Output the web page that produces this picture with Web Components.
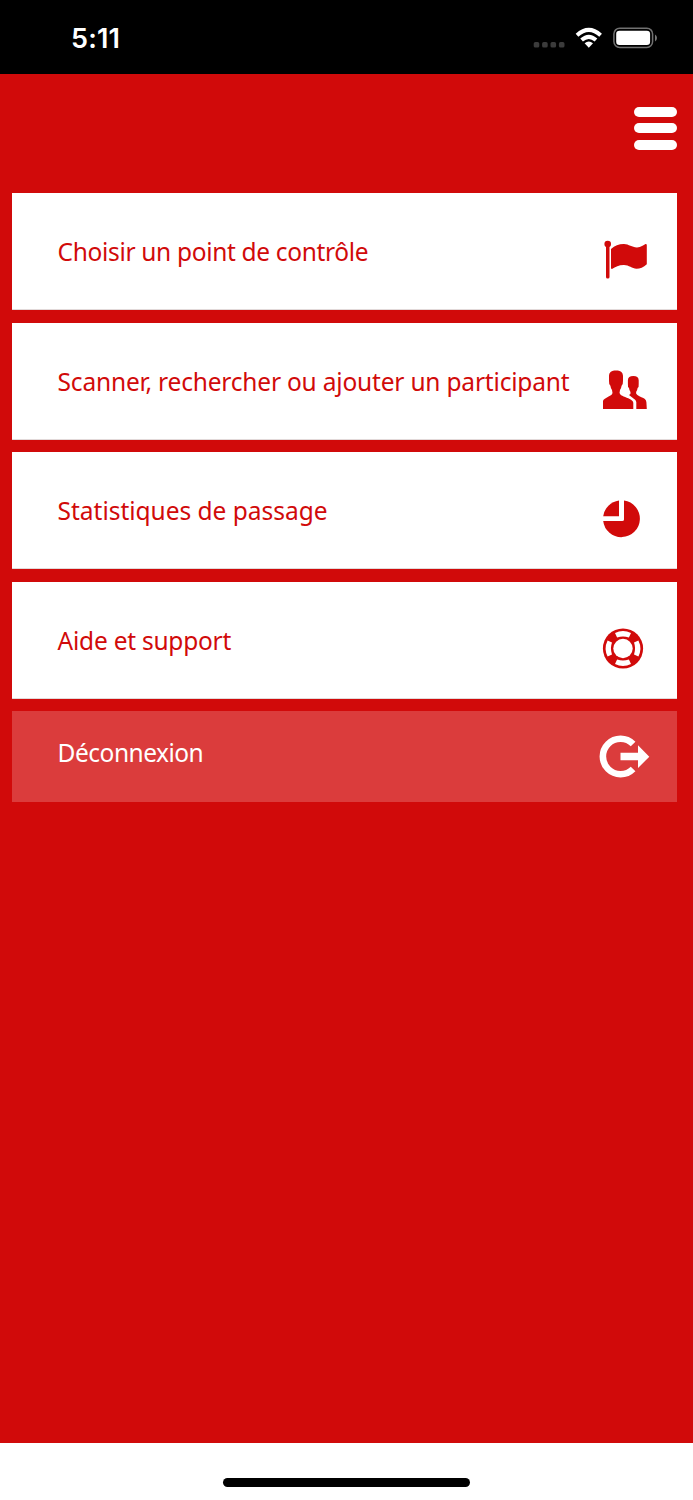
<!DOCTYPE html>
<html lang="fr">
<head>
<meta charset="utf-8">
<title>Menu</title>
<style>
html,body{margin:0;padding:0;background:#d10a0a}
</style>
</head>
<body>
<app-screen>
  <status-bar slot="status">5:11</status-bar>
  <menu-toggle slot="header"></menu-toggle>
  <menu-item icon="flag" style="--track:-.33px">Choisir un point de contrôle</menu-item>
  <menu-item icon="people" style="--track:-.19px">Scanner, rechercher ou ajouter un participant</menu-item>
  <menu-item icon="pie" style="--track:-.02px">Statistiques de passage</menu-item>
  <menu-item icon="ring" style="--track:-.24px">Aide et support</menu-item>
  <menu-item icon="logout" variant="logout" style="--track:-.5px">Déconnexion</menu-item>
</app-screen>
<script>
const define = (name, html, setup) => customElements.define(name, class extends HTMLElement {
  connectedCallback() {
    if (this.shadowRoot) return;
    const t = document.createElement('template');
    t.innerHTML = html;
    this.attachShadow({mode: 'open'}).append(t.content.cloneNode(true));
    if (setup) setup(this);
  }
});

define('app-screen', `<style>
:host{display:flex;flex-direction:column;width:693px;height:1500px;overflow:hidden;background:#d10a0a;font-family:"Noto Sans","Open Sans",sans-serif}
header{height:119.4px;flex:none;display:flex;justify-content:flex-end;align-items:flex-start;box-sizing:border-box;padding:33px 16px 0 0}
main{flex:1;display:flex;flex-direction:column;gap:12.4px;padding:0 16px 0 12.3px}
</style>
<slot name="status"></slot><header><slot name="header"></slot></header><main><slot></slot></main><home-bar></home-bar>`);

define('status-bar', `<style>
:host{display:flex;flex:none;justify-content:space-between;height:74px;background:#000;color:#fff}
.time{font:600 27px/30px Inter,sans-serif;padding:24px 0 0 71px;letter-spacing:.2px}
svg{display:block}
</style><div class="time"><slot></slot></div>
<svg width="173" height="74" viewBox="520 0 173 74">
<g fill="#3b3b3b"><rect x="533.7" y="42" width="5.6" height="5.6" rx="1.7"/><rect x="542.1" y="42" width="5.6" height="5.6" rx="1.7"/><rect x="550.5" y="42" width="5.6" height="5.6" rx="1.7"/><rect x="558.9" y="42" width="5.6" height="5.6" rx="1.7"/></g>
<g fill="none" stroke="#fff" stroke-width="4"><path d="M577 35.2Q588.8 24.6 600.6 35.2"/><path d="M581.6 40Q588.8 33.6 596 40"/></g>
<path d="M584.6 43.3Q588.8 39.8 593 43.3L588.8 47.7Z" fill="#fff"/>
<rect x="613.9" y="28.2" width="38.7" height="19.2" rx="5.8" fill="none" stroke="#717171" stroke-width="1.5"/>
<rect x="616.2" y="30.8" width="33.9" height="14.2" rx="3.3" fill="#fff"/>
<path d="M655 34.5Q657 35.5 657 38T655 41.4Z" fill="#777"/></svg>`);

define('menu-toggle', `<style>
:host{display:flex;flex-direction:column;gap:6.6px;width:43px}
i{height:9.9px;border-radius:5px;background:#fff}
</style><i></i><i></i><i></i>`);

define('home-bar', `<style>
:host{display:flex;justify-content:center;align-items:flex-start;height:57.4px;flex:none;background:#fff;box-sizing:border-box;padding-top:35.4px}
i{width:247.5px;height:8.5px;border-radius:5px;background:#000}
</style><i></i>`);

const sectors = [0, 90, 180, 270].map(a =>
  `<path transform="rotate(${a} 623 648)" fill="#fff" d="M615 632.6Q623 628.6 631 632.6L628.9 637Q623 634.8 617.1 637Z"/>`).join('');

const icons = {
  flag: ['597 230.3', `<circle cx="607.7" cy="244.4" r="3.3"/><rect x="606" y="244" width="3.5" height="34.8" rx="1.6"/>
    <path d="M611 249.2C615 246 619 244.3 624 244.4C629 244.6 632 247.8 637 247.7C641 247.5 643.5 245.4 645.5 244.3Q646.8 244 646.8 245.5V264.5C643.5 267.6 640 269 636.5 269C632 268.8 629 265.5 624 265.4C619 265.3 615.5 267.2 612 269.2Q611 269.4 611 268.4Z"/>`],
  people: ['597 359.7', `<path d="M603 408.7V401Q603 399.4 604.5 398.6C607 397 610.5 395.6 611.8 394.2Q613 392.4 612 389.6Q610.7 388 610.4 385.5Q608.8 384 609 380.4V375.5C609.3 371.6 611.5 370.2 616 370.2S622.7 371.6 623 375.5V380.4Q623.2 384 621.6 385.5Q621.3 388 620 389.6Q619 392.4 620.4 394.2C622 396 628 397.4 631 399.4Q633.3 400.8 633.3 402.5V408.7Z"/>
    <path d="M629 394.8Q631.1 393.9 630.5 391.6Q629.2 390 629 387.8Q627.6 386.6 627.9 383.6V380C628 376.8 629.8 375.6 633.3 375.6S638.6 376.8 638.7 380V383.6Q639 386.6 637.6 387.8Q637.4 390 636.1 391.6Q635.7 393.7 637.4 394.6C640 396.4 643 397.2 644.9 398.8Q646.3 400 646.4 402L646.8 408.7H636.3V401.7Q636 399.8 633.5 398.3Z"/>`],
  pie: ['597 489.1', `<path d="M619 516.3V500.5A18.5 18.5 0 0 0 603.2 516.3Z"/><path d="M624 500.6V519.5Q624 521 622.2 521H603.2A18.4 18.4 0 1 0 624 500.6Z"/>`],
  ring: ['597 618.5', `<circle cx="623" cy="648" r="20.1"/>${sectors}<circle cx="623" cy="648" r="9.7" fill="#fff"/>`],
  logout: ['597 716', `<path d="M633.1 744A17.7 17.7 0 1 0 633.1 769" fill="none" stroke="currentColor" stroke-width="6.6"/><path d="M620.5 752.8H638V745.2L649.3 756.7L638 768V760.2H620.5Z"/>`]
};

define('menu-item', `<style>
:host{display:flex;justify-content:space-between;box-sizing:border-box;height:117px;flex:none;background:#fff;color:#d10a0a;border-bottom:1px solid #e2d9d9;padding:0 20px 0 45.3px}
:host([variant=logout]){height:91px;background:#db3c3c;color:#fff;border:0}
span{font-size:24.5px;line-height:34px;margin-top:42px;letter-spacing:var(--track);white-space:nowrap}
:host([variant=logout]) span{margin-top:25px}
svg{display:block;width:60px;height:60px;margin-top:37px;fill:currentColor;flex:none}
:host([variant=logout]) svg{margin-top:5px;height:70px}
</style><span><slot></slot></span><svg></svg>`, el => {
  const [origin, shapes] = icons[el.getAttribute('icon')];
  const svg = el.shadowRoot.querySelector('svg');
  svg.setAttribute('viewBox', origin + (el.getAttribute('variant') ? ' 60 70' : ' 60 60'));
  svg.innerHTML = shapes;
});
</script>
</body>
</html>
